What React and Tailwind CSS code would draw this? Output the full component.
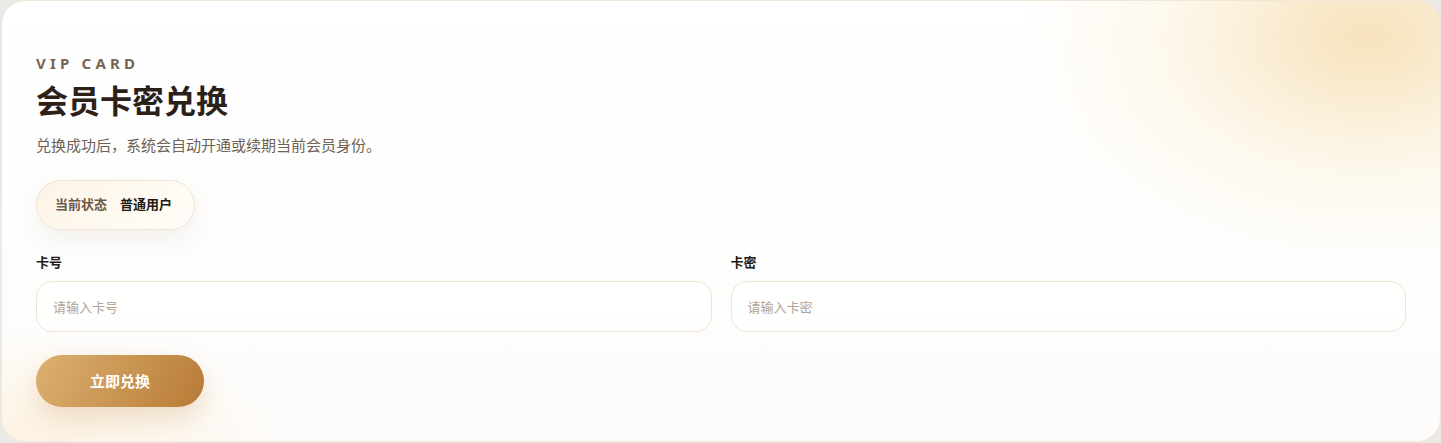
import React from "react";

export default function App() {
  return (
    <div className="min-h-[443px] bg-[#ebe9e6] pl-px" style={{ fontFamily: '"Noto Sans", "Noto Sans CJK SC", sans-serif' }}>
      <div className="h-[442px] rounded-[24px] border border-[#f1e7d9] bg-[radial-gradient(ellipse_460px_300px_at_95%_8%,rgba(245,221,176,0.85),rgba(252,240,215,0.45)_45%,transparent_75%),radial-gradient(ellipse_420px_160px_at_0%_100%,rgba(253,240,218,0.8),transparent_70%),linear-gradient(180deg,#ffffff_0%,#fdfcfb_100%)] pl-[34px] pr-[34px] pt-[52px]">
        {/* header */}
        <p className="text-[15px] font-bold uppercase tracking-[0.28em] text-[#7a6553] leading-5">
          VIP Card
        </p>
        <h1 className="mt-[6px] text-[32px] font-bold leading-[44px] text-[#2b2119]">
          会员卡密兑换
        </h1>
        <p className="mt-[10px] text-[15px] leading-6 text-[#6f6154]">
          兑换成功后，系统会自动开通或续期当前会员身份。
        </p>

        {/* status */}
        <div className="mt-[23px] inline-flex h-[50px] items-center gap-[13px] rounded-full border border-[#f1e3cf] bg-[linear-gradient(135deg,#fdf4e6,#fffdf9)] pl-[18px] pr-[22px] shadow-[0_10px_24px_rgba(120,90,50,0.08)]">
          <span className="text-[13px] font-bold text-[#6d5947]">当前状态</span>
          <span className="text-[13px] font-bold text-[#211a14]">普通用户</span>
        </div>

        {/* form */}
        <div className="mt-[22px] grid grid-cols-2 gap-[19px]">
          <div>
            <label className="block text-[13px] font-bold leading-5 text-[#211a14]">卡号</label>
            <input
              className="mt-[9px] h-[51px] w-full rounded-[16px] border border-[#efe3d3] bg-white/70 px-[16px] text-[13px] text-[#2b2119] outline-none placeholder:text-[#b1a295]"
              placeholder="请输入卡号"
            />
          </div>
          <div>
            <label className="block text-[13px] font-bold leading-5 text-[#211a14]">卡密</label>
            <input
              className="mt-[9px] h-[51px] w-full rounded-[16px] border border-[#efe3d3] bg-white/70 px-[16px] text-[13px] text-[#2b2119] outline-none placeholder:text-[#b1a295]"
              placeholder="请输入卡密"
            />
          </div>
        </div>

        <button className="mt-[23px] h-[52px] w-[168px] rounded-full bg-[linear-gradient(120deg,#dcb170,#b87a36)] text-[15px] font-bold text-white shadow-[0_12px_26px_rgba(184,122,54,0.22)]">
          立即兑换
        </button>
      </div>
    </div>
  );
}
